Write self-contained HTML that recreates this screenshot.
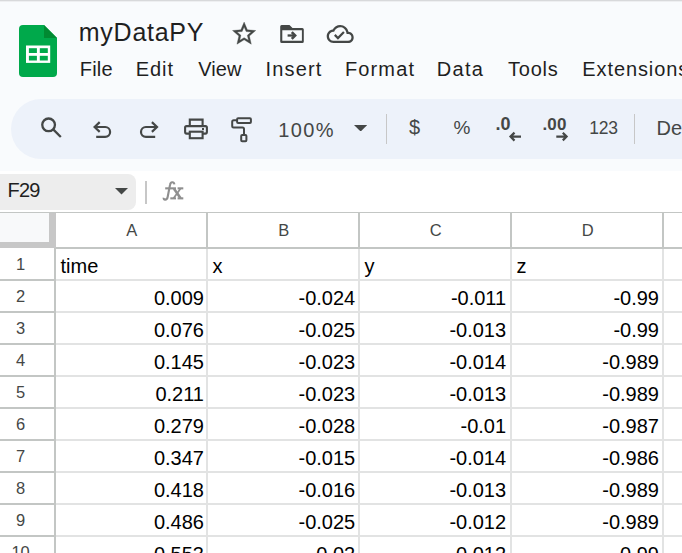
<!DOCTYPE html>
<html><head><meta charset="utf-8"><style>
html,body{margin:0;padding:0;width:682px;height:553px;overflow:hidden;background:#fff}
body{position:relative;font-family:"Liberation Sans",sans-serif}
.t{position:absolute;line-height:1;white-space:nowrap}
</style></head><body>
<div style="position:absolute;left:0;top:0;width:682px;height:171px;background:#f9fbfd"></div>
<div style="position:absolute;left:11px;top:99px;width:700px;height:60px;border-radius:30px;background:#edf2fa"></div>
<div style="position:absolute;left:0;top:171px;width:682px;height:382px;background:#fff"></div>
<div style="position:absolute;left:0;top:0;width:682px;height:1px;background:#d8d9db"></div>
<div style="position:absolute;left:0;top:1px;width:682px;height:1px;background:#eeeff1"></div>
<svg style="position:absolute;left:0;top:0" width="682" height="553" viewBox="0 0 682 553">
<path d="M23 25 H44 L57 38 V73 Q57 77 53 77 H23 Q19 77 19 73 V29 Q19 25 23 25 Z" fill="#00a94b"/>
<path d="M44 25 L57 38 H44 Z" fill="#018a32"/>
<rect x="26" y="45.5" width="24.2" height="17.4" fill="#fff"/>
<rect x="28.9" y="48.2" width="8" height="4.8" fill="#00a94b"/>
<rect x="39.8" y="48.2" width="8" height="4.8" fill="#00a94b"/>
<rect x="28.9" y="55.8" width="8" height="4.7" fill="#00a94b"/>
<rect x="39.8" y="55.8" width="8" height="4.7" fill="#00a94b"/>
</svg>
<div class="t" style="left:78.8px;top:19.84px;font-size:25px;color:#1f1f1f;letter-spacing:0.74px">myDataPY</div>
<div class="t" style="left:79.8px;top:58.67px;font-size:20px;color:#1f1f1f;letter-spacing:0.2px">File</div>
<div class="t" style="left:135.8px;top:58.67px;font-size:20px;color:#1f1f1f;letter-spacing:0.93px">Edit</div>
<div class="t" style="left:198.2px;top:58.67px;font-size:20px;color:#1f1f1f;letter-spacing:0.13px">View</div>
<div class="t" style="left:265.6px;top:58.67px;font-size:20px;color:#1f1f1f;letter-spacing:1.16px">Insert</div>
<div class="t" style="left:345px;top:58.67px;font-size:20px;color:#1f1f1f;letter-spacing:1.12px">Format</div>
<div class="t" style="left:436.8px;top:58.67px;font-size:20px;color:#1f1f1f;letter-spacing:1.3px">Data</div>
<div class="t" style="left:508px;top:58.67px;font-size:20px;color:#1f1f1f;letter-spacing:0.78px">Tools</div>
<div class="t" style="left:582.3px;top:58.67px;font-size:20px;color:#1f1f1f;letter-spacing:0.9px">Extensions</div>
<div style="position:absolute;left:-20px;top:174px;width:155.5px;height:36px;border-radius:8px;background:#ededed"></div>
<div class="t" style="left:7.5px;top:180.37px;font-size:20px;color:#1f1f1f;letter-spacing:-0.8px">F29</div>
<div style="position:absolute;left:145px;top:181px;width:1.5px;height:23px;background:#c7c7c7"></div>
<svg style="position:absolute;left:0;top:0" width="682" height="553" viewBox="0 0 682 553" fill="#444746">
<g transform="translate(230.2 19.8) scale(1.16)"><path stroke="#444746" stroke-width="0.3" d="M22 9.24l-7.19-.62L12 2 9.19 8.63 2 9.24l5.46 4.73L5.82 21 12 17.27 18.18 21l-1.63-7.03L22 9.24zM12 15.4l-3.76 2.27 1-4.28-3.32-2.88 4.38-.38L12 6.1l1.71 4.04 4.38.38-3.32 2.88 1 4.28L12 15.4z"/></g>
<path fill-rule="evenodd" d="M281.6 25 H289.5 L292.5 28 H302.3 Q303.8 28 303.8 29.5 V41.4 Q303.8 42.9 302.3 42.9 H281.7 Q280.2 42.9 280.2 41.4 V26.5 Q280.2 25 281.6 25 Z M282.3 30.3 V40.7 H301.9 V30.3 Z"/>
<g transform="translate(326.7 20.5) scale(1.125)"><path d="M19.35 10.04C18.67 6.59 15.64 4 12 4 9.11 4 6.6 5.64 5.35 8.04 2.34 8.36 0 10.91 0 14c0 3.310 2.69 6 6 6h13c2.76 0 5-2.24 5-5 0-2.64-2.05-4.78-4.650-4.96zM19 18H6c-2.21 0-4-1.79-4-4 0-2.05 1.53-3.76 3.56-3.97l1.07-.11.5-.95C8.080 7.14 9.94 6 12 6c2.62 0 4.88 1.86 5.390 4.43l.3 1.5 1.53.11c1.56.1 2.78 1.41 2.78 2.96 0 1.65-1.35 3-3 3zm-9-3.82l-2.09-2.09L6.5 13.5 10 17l6.01-6.01-1.41-1.41z"/></g>
</svg>
<svg style="position:absolute;left:0;top:0" width="682" height="553" viewBox="0 0 682 553" fill="none" stroke="#444746" stroke-width="2.4">
<path d="M287.6 35.5 H294.5" stroke-width="2.3"/><path d="M291.8 32.2 L295.1 35.5 L291.8 38.8" stroke-width="2.6"/>
</svg>
<svg style="position:absolute;left:0;top:0" width="682" height="553" viewBox="0 0 682 553" fill="none" stroke="#444746" stroke-width="2.2">
<!-- search -->
<circle cx="48.6" cy="124.85" r="6.35" stroke-width="2.3"/>
<path d="M53.2 129.4 L60.8 137" stroke-width="2.3"/>
<!-- undo -->
<path d="M99.7 122.1 L94.6 127 L99.7 131.9 M94.6 127 H105.2 A4.9 4.9 0 0 1 105.2 136.8 H96.2"/>
<!-- redo -->
<path d="M151.9 122.1 L157 127 L151.9 131.9 M157 127 H145.9 A4.9 4.9 0 0 0 145.9 136.8 H155.2"/>
<!-- print -->
<path d="M189.8 125.5 V119.6 H202.6 V125.5" stroke-width="2.1"/>
<path d="M189.8 133.6 H186.6 Q185.1 133.6 185.1 132.1 V127.6 Q185.1 126.1 186.6 126.1 H205.4 Q206.9 126.1 206.9 127.6 V132.1 Q206.9 133.6 205.4 133.6 H202.6" stroke-width="2.1"/>
<rect x="189.8" y="131.7" width="12.8" height="6.5" stroke-width="2.1"/>
<!-- paint format -->
<rect x="237.1" y="118.2" width="13.8" height="4.8" rx="1" stroke-width="2"/>
<path d="M237.1 120.3 H233.7 Q232.2 120.3 232.2 121.8 V126.1 Q232.2 127.6 233.7 127.6 H242.5 Q244 127.6 244 129.1 V135" stroke-width="2"/>
<rect x="241.2" y="135" width="5.2" height="6.3" rx="1" stroke-width="2"/>
</svg>
<div style="position:absolute;left:202.3px;top:127.6px;width:2px;height:2px;background:#444746"></div>
<div class="t" style="left:278.3px;top:120.17px;font-size:20px;color:#444746;letter-spacing:1.33px">100%</div>
<svg style="position:absolute;left:354px;top:124.8px" width="13.3" height="6.5" viewBox="0 0 13.3 6.5"><path d="M0 0 H13.3 L6.65 6.5 Z" fill="#444746"/></svg>
<div style="position:absolute;left:386px;top:114px;width:1px;height:29.5px;background:#c7c7c7"></div>
<div style="position:absolute;left:634px;top:114px;width:1px;height:29.5px;background:#c7c7c7"></div>
<div class="t" style="left:409px;top:116.57px;font-size:20px;color:#444746;">$</div>
<div class="t" style="left:453.5px;top:118.22px;font-size:19px;color:#444746;">%</div>
<div class="t" style="left:495.5px;top:115.46px;font-size:18px;color:#444746;font-weight:bold">.0</div>
<div class="t" style="left:542.5px;top:115.61px;font-size:17px;color:#444746;font-weight:bold;letter-spacing:0.1px">.00</div>
<svg style="position:absolute;left:0;top:0" width="682" height="553" viewBox="0 0 682 553" fill="none" stroke="#444746" stroke-width="2.2">
<path d="M521 136.6 H510.5 M514.5 132.6 L510.5 136.6 L514.5 140.6"/>
<path d="M556.3 136.6 H566.6 M562.8 132.8 L566.6 136.6 L562.8 140.4"/>
</svg>
<div class="t" style="left:589.3px;top:119.59px;font-size:17.5px;color:#444746;letter-spacing:-0.3px">123</div>
<div class="t" style="left:656.5px;top:117.67px;font-size:20px;color:#444746;">De</div>
<svg style="position:absolute;left:115px;top:188px" width="13" height="6.5" viewBox="0 0 13 6.5"><path d="M0 0 H13 L6.5 6.5 Z" fill="#444746"/></svg>
<svg style="position:absolute;left:0;top:0" width="682" height="553" viewBox="0 0 682 553">
<g fill="none" stroke="#8f8f8f" stroke-width="2.1">
<path d="M174.4 184.4 Q174 182.1 172.2 182.3 Q170.4 182.5 170 185 L167.6 197.3 Q167.1 199.7 165.1 199.6 Q163.4 199.5 163.7 197.8"/>
<path d="M174 188.8 L180.6 198.2" stroke-width="2.6"/>
<path d="M180.4 188.8 L173.6 198.2" stroke-width="1.8"/>
</g>
<g fill="#8f8f8f">
<rect x="165.2" y="187.3" width="10.8" height="2.1"/>
<rect x="177.6" y="187.3" width="5.7" height="2.1"/>
<rect x="170.3" y="197.3" width="5.7" height="2.1"/>
<rect x="177.6" y="197.3" width="5.7" height="2.1"/>
</g></svg>
<div style="position:absolute;left:0;top:212px;width:682px;height:1px;background:#c3c6c4"></div>
<div style="position:absolute;left:0;top:213px;width:49px;height:29px;background:#f8f9fa"></div>
<div style="position:absolute;left:49px;top:213px;width:7px;height:35px;background:#c7c7c7"></div>
<div style="position:absolute;left:0;top:242px;width:56px;height:6px;background:#c7c7c7"></div>
<div style="position:absolute;left:56px;top:247px;width:626px;height:2px;background:#c3c6c4"></div>
<div style="position:absolute;left:54px;top:248px;width:2px;height:305px;background:#c3c6c4"></div>
<div style="position:absolute;left:206px;top:213px;width:2px;height:35px;background:#c3c6c4"></div>
<div style="position:absolute;left:206px;top:249px;width:2px;height:304px;background:#e2e3e3"></div>
<div style="position:absolute;left:358px;top:213px;width:2px;height:35px;background:#c3c6c4"></div>
<div style="position:absolute;left:358px;top:249px;width:2px;height:304px;background:#e2e3e3"></div>
<div style="position:absolute;left:510px;top:213px;width:2px;height:35px;background:#c3c6c4"></div>
<div style="position:absolute;left:510px;top:249px;width:2px;height:304px;background:#e2e3e3"></div>
<div style="position:absolute;left:662px;top:213px;width:2px;height:35px;background:#c3c6c4"></div>
<div style="position:absolute;left:662px;top:249px;width:2px;height:304px;background:#e2e3e3"></div>
<div style="position:absolute;left:0;top:279px;width:54px;height:2px;background:#c3c6c4"></div>
<div style="position:absolute;left:56px;top:279px;width:626px;height:2px;background:#e2e3e3"></div>
<div style="position:absolute;left:0;top:311px;width:54px;height:2px;background:#c3c6c4"></div>
<div style="position:absolute;left:56px;top:311px;width:626px;height:2px;background:#e2e3e3"></div>
<div style="position:absolute;left:0;top:343px;width:54px;height:2px;background:#c3c6c4"></div>
<div style="position:absolute;left:56px;top:343px;width:626px;height:2px;background:#e2e3e3"></div>
<div style="position:absolute;left:0;top:375px;width:54px;height:2px;background:#c3c6c4"></div>
<div style="position:absolute;left:56px;top:375px;width:626px;height:2px;background:#e2e3e3"></div>
<div style="position:absolute;left:0;top:407px;width:54px;height:2px;background:#c3c6c4"></div>
<div style="position:absolute;left:56px;top:407px;width:626px;height:2px;background:#e2e3e3"></div>
<div style="position:absolute;left:0;top:439px;width:54px;height:2px;background:#c3c6c4"></div>
<div style="position:absolute;left:56px;top:439px;width:626px;height:2px;background:#e2e3e3"></div>
<div style="position:absolute;left:0;top:471px;width:54px;height:2px;background:#c3c6c4"></div>
<div style="position:absolute;left:56px;top:471px;width:626px;height:2px;background:#e2e3e3"></div>
<div style="position:absolute;left:0;top:503px;width:54px;height:2px;background:#c3c6c4"></div>
<div style="position:absolute;left:56px;top:503px;width:626px;height:2px;background:#e2e3e3"></div>
<div style="position:absolute;left:0;top:535px;width:54px;height:2px;background:#c3c6c4"></div>
<div style="position:absolute;left:56px;top:535px;width:626px;height:2px;background:#e2e3e3"></div>
<div class="t" style="left:31.69999999999999px;width:200px;top:221.93px;font-size:16.5px;color:#444746;text-align:center;">A</div>
<div class="t" style="left:183.7px;width:200px;top:221.93px;font-size:16.5px;color:#444746;text-align:center;">B</div>
<div class="t" style="left:335.7px;width:200px;top:221.93px;font-size:16.5px;color:#444746;text-align:center;">C</div>
<div class="t" style="left:487.70000000000005px;width:200px;top:221.93px;font-size:16.5px;color:#444746;text-align:center;">D</div>
<div class="t" style="left:-79.4px;width:200px;top:255.83px;font-size:16.5px;color:#444746;text-align:center;">1</div>
<div class="t" style="left:-79.4px;width:200px;top:287.83px;font-size:16.5px;color:#444746;text-align:center;">2</div>
<div class="t" style="left:-79.4px;width:200px;top:319.83px;font-size:16.5px;color:#444746;text-align:center;">3</div>
<div class="t" style="left:-79.4px;width:200px;top:351.83px;font-size:16.5px;color:#444746;text-align:center;">4</div>
<div class="t" style="left:-79.4px;width:200px;top:383.83px;font-size:16.5px;color:#444746;text-align:center;">5</div>
<div class="t" style="left:-79.4px;width:200px;top:415.83px;font-size:16.5px;color:#444746;text-align:center;">6</div>
<div class="t" style="left:-79.4px;width:200px;top:447.83px;font-size:16.5px;color:#444746;text-align:center;">7</div>
<div class="t" style="left:-79.4px;width:200px;top:479.83px;font-size:16.5px;color:#444746;text-align:center;">8</div>
<div class="t" style="left:-79.4px;width:200px;top:511.83px;font-size:16.5px;color:#444746;text-align:center;">9</div>
<div class="t" style="left:-79.4px;width:200px;top:543.83px;font-size:16.5px;color:#444746;text-align:center;">10</div>
<div class="t" style="left:60.5px;top:255.77px;font-size:20px;color:#000;">time</div>
<div class="t" style="left:212.5px;top:255.77px;font-size:20px;color:#000;">x</div>
<div class="t" style="left:364.5px;top:255.77px;font-size:20px;color:#000;">y</div>
<div class="t" style="left:516.5px;top:255.77px;font-size:20px;color:#000;">z</div>
<div class="t" style="right:478px;top:287.77px;font-size:20px;color:#000;text-align:right;">0.009</div>
<div class="t" style="right:326.8px;top:287.77px;font-size:20px;color:#000;text-align:right;">-0.024</div>
<div class="t" style="right:175.89999999999998px;top:287.77px;font-size:20px;color:#000;text-align:right;">-0.011</div>
<div class="t" style="right:23px;top:287.77px;font-size:20px;color:#000;text-align:right;">-0.99</div>
<div class="t" style="right:478px;top:319.77px;font-size:20px;color:#000;text-align:right;">0.076</div>
<div class="t" style="right:326.8px;top:319.77px;font-size:20px;color:#000;text-align:right;">-0.025</div>
<div class="t" style="right:175.89999999999998px;top:319.77px;font-size:20px;color:#000;text-align:right;">-0.013</div>
<div class="t" style="right:23px;top:319.77px;font-size:20px;color:#000;text-align:right;">-0.99</div>
<div class="t" style="right:478px;top:351.77px;font-size:20px;color:#000;text-align:right;">0.145</div>
<div class="t" style="right:326.8px;top:351.77px;font-size:20px;color:#000;text-align:right;">-0.023</div>
<div class="t" style="right:175.89999999999998px;top:351.77px;font-size:20px;color:#000;text-align:right;">-0.014</div>
<div class="t" style="right:23px;top:351.77px;font-size:20px;color:#000;text-align:right;">-0.989</div>
<div class="t" style="right:478px;top:383.77px;font-size:20px;color:#000;text-align:right;">0.211</div>
<div class="t" style="right:326.8px;top:383.77px;font-size:20px;color:#000;text-align:right;">-0.023</div>
<div class="t" style="right:175.89999999999998px;top:383.77px;font-size:20px;color:#000;text-align:right;">-0.013</div>
<div class="t" style="right:23px;top:383.77px;font-size:20px;color:#000;text-align:right;">-0.989</div>
<div class="t" style="right:478px;top:415.77px;font-size:20px;color:#000;text-align:right;">0.279</div>
<div class="t" style="right:326.8px;top:415.77px;font-size:20px;color:#000;text-align:right;">-0.028</div>
<div class="t" style="right:175.89999999999998px;top:415.77px;font-size:20px;color:#000;text-align:right;">-0.01</div>
<div class="t" style="right:23px;top:415.77px;font-size:20px;color:#000;text-align:right;">-0.987</div>
<div class="t" style="right:478px;top:447.77px;font-size:20px;color:#000;text-align:right;">0.347</div>
<div class="t" style="right:326.8px;top:447.77px;font-size:20px;color:#000;text-align:right;">-0.015</div>
<div class="t" style="right:175.89999999999998px;top:447.77px;font-size:20px;color:#000;text-align:right;">-0.014</div>
<div class="t" style="right:23px;top:447.77px;font-size:20px;color:#000;text-align:right;">-0.986</div>
<div class="t" style="right:478px;top:479.77px;font-size:20px;color:#000;text-align:right;">0.418</div>
<div class="t" style="right:326.8px;top:479.77px;font-size:20px;color:#000;text-align:right;">-0.016</div>
<div class="t" style="right:175.89999999999998px;top:479.77px;font-size:20px;color:#000;text-align:right;">-0.013</div>
<div class="t" style="right:23px;top:479.77px;font-size:20px;color:#000;text-align:right;">-0.989</div>
<div class="t" style="right:478px;top:511.77px;font-size:20px;color:#000;text-align:right;">0.486</div>
<div class="t" style="right:326.8px;top:511.77px;font-size:20px;color:#000;text-align:right;">-0.025</div>
<div class="t" style="right:175.89999999999998px;top:511.77px;font-size:20px;color:#000;text-align:right;">-0.012</div>
<div class="t" style="right:23px;top:511.77px;font-size:20px;color:#000;text-align:right;">-0.989</div>
<div class="t" style="right:478px;top:543.77px;font-size:20px;color:#000;text-align:right;">0.553</div>
<div class="t" style="right:326.8px;top:543.77px;font-size:20px;color:#000;text-align:right;">-0.02</div>
<div class="t" style="right:175.89999999999998px;top:543.77px;font-size:20px;color:#000;text-align:right;">-0.012</div>
<div class="t" style="right:23px;top:543.77px;font-size:20px;color:#000;text-align:right;">-0.99</div>
</body></html>
